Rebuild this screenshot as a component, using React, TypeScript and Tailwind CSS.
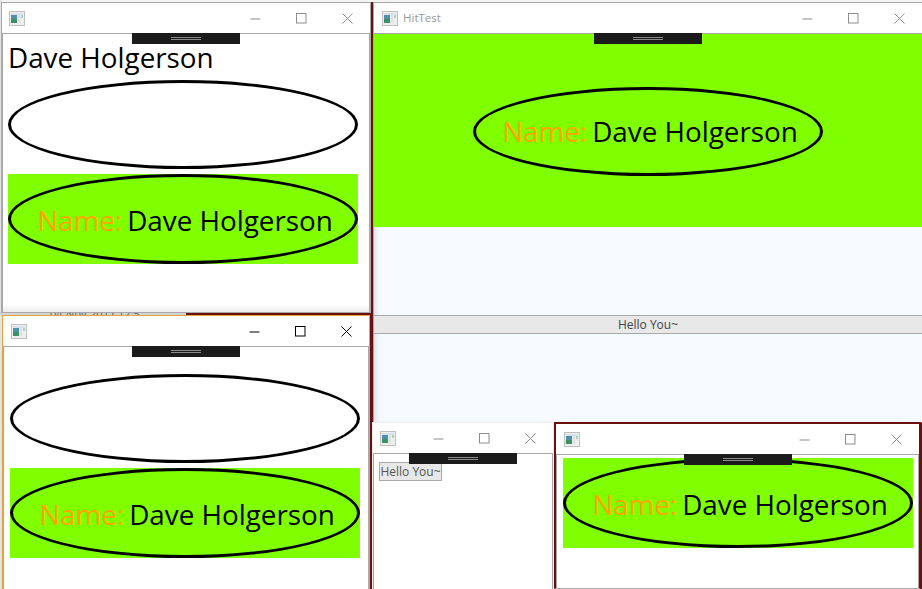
import type { ReactNode } from "react";

const FONT = "[font-family:'Open_Sans','Noto_Sans',sans-serif]";

function AppIcon() {
  return (
    <svg width="16" height="15" viewBox="0 0 16 15" className="shrink-0">
      <rect x="0.5" y="0.5" width="15" height="14" fill="#eeeeee" stroke="#c0c0c0" />
      <rect x="2" y="2" width="12" height="2" fill="#d9e2ea" />
      <rect x="2" y="4" width="6" height="4" fill="#4f8fa8" />
      <rect x="2" y="8" width="6" height="4" fill="#3d8f6a" />
      <rect x="9" y="4" width="2" height="8" fill="#dde0e0" />
      <rect x="12" y="4" width="2" height="3" fill="#a5d3c6" />
    </svg>
  );
}

function TitleBar({ title, active, pad }: { title?: string; active?: boolean; pad: string }) {
  const stroke = active ? "#000000" : "#8c8c8c";
  return (
    <div className="flex h-[30px] shrink-0 items-center bg-white">
      <div className={`flex flex-1 items-center gap-[5px] ${pad}`}>
        <AppIcon />
        {title && <span className="text-[11.5px] text-[#9a9a9a]">{title}</span>}
      </div>
      <div className="flex h-full w-[46px] items-center justify-center">
        <svg width="11" height="11" viewBox="0 0 11 11"><path d="M0.5 6h10" stroke={stroke} /></svg>
      </div>
      <div className="flex h-full w-[46px] items-center justify-center">
        <svg width="11" height="11" viewBox="0 0 11 11"><rect x="0.5" y="0.5" width="9.5" height="9.5" fill="none" stroke={stroke} /></svg>
      </div>
      <div className="flex h-full w-[46px] items-center justify-center">
        <svg width="11" height="11" viewBox="0 0 11 11"><path d="M0.5 0.5l10 10M10.5 0.5l-10 10" stroke={stroke} /></svg>
      </div>
    </div>
  );
}

function DebugBar() {
  return (
    <div className="absolute left-1/2 top-[-1px] z-10 flex h-[11px] w-[108px] -translate-x-1/2 flex-col items-center justify-center gap-px bg-[#1b1b1b]">
      <div className="h-px w-[30px] bg-[#8a8a8a]" />
      <div className="h-px w-[30px] bg-[#8a8a8a]" />
    </div>
  );
}

function Ellipse({ height = "h-[89px]", children }: { height?: string; children?: ReactNode }) {
  return (
    <div className={`flex w-[350px] items-center justify-center rounded-[50%] border-[3px] border-black ${height}`}>
      {children}
    </div>
  );
}

function NameText() {
  return (
    <span className="whitespace-nowrap pl-[4px] text-[27.8px] leading-none">
      <span className="text-[#ffa500]">Name:</span>
      <span className="ml-[5px] text-black">Dave Holgerson</span>
    </span>
  );
}

function GreenEllipse() {
  return (
    <div className="w-[350px] bg-[#7fff00]">
      <Ellipse height="h-[90px]">
        <div className="pt-[5px]">
          <NameText />
        </div>
      </Ellipse>
    </div>
  );
}

function Window({ className, title, active, pad = "pl-[8px]", inner = true, children }: { className: string; title?: string; active?: boolean; pad?: string; inner?: boolean; children?: ReactNode }) {
  return (
    <div className={`absolute flex flex-col border bg-white ${className}`}>
      <TitleBar title={title} active={active} pad={pad} />
      <div className={`relative flex-1 border-t border-[#a8a8a8] ${inner ? "border-x" : ""}`}>
        <DebugBar />
        {children}
      </div>
    </div>
  );
}

export default function App() {
  return (
    <div className={`relative h-[589px] w-[922px] overflow-hidden bg-[#6a1010] ${FONT}`}>
      {/* desktop bits showing between the windows */}
      <div className="absolute left-0 top-0 h-[2px] w-full bg-[#f4f4f4]" />
      <div className="absolute left-0 top-0 h-full w-[2px] bg-[#e4e4e4]" />
      <div className="absolute left-0 top-[312px] h-[3px] w-[186px] overflow-hidden bg-[#d4d4d4] pl-[50px] text-[11px] leading-[3px] text-[#555555]">
        04-Nov-2017 12:5
      </div>

      <Window className="left-px top-[2px] h-[311px] w-[370px] border-[#a8a8a8]" pad="pl-[7px]">
        <div className="flex flex-col pl-[5px]">
          <div className="text-[27.8px] leading-[46px] text-black">Dave Holgerson</div>
          <Ellipse />
          <div className="mt-[5px]">
            <GreenEllipse />
          </div>
        </div>
        <div className="absolute bottom-0 left-0 h-[8px] w-full bg-gradient-to-b from-white to-[#ececec]" />
      </Window>

      <Window className="left-[373px] top-[2px] h-[421px] w-[550px] border-[#a8a8a8]" title="HitTest" inner={false}>
        <div className="flex h-full flex-col bg-[#f5faff] shadow-[inset_5px_0_5px_-3px_#dde0e4]">
          <div className="flex h-[193px] items-center justify-center bg-[#7fff00] pt-[2px]">
            <Ellipse>
              <NameText />
            </Ellipse>
          </div>
          <div className="mt-[88px] flex h-[19px] items-center justify-center border-y border-[#a8a8a8] bg-[#e8e8e8] text-[12px] text-[#444444]">
            Hello You~
          </div>
        </div>
      </Window>

      <Window className="left-[2px] top-[315px] h-[280px] w-[368px] border-[#e8a33d]" active>
        <div className="flex flex-col pl-[6px] pt-[27px]">
          <Ellipse />
          <div className="mt-[5px]">
            <GreenEllipse />
          </div>
        </div>
      </Window>

      <Window className="left-[372px] top-[422px] h-[170px] w-[182px] border-[#ececec]" pad="pl-[7px]">
        <div className="pl-[5px] pt-[8px]">
          <div className="flex h-[19px] w-[63px] items-center justify-center whitespace-nowrap border border-[#a8a8a8] bg-[#e8e8e8] text-[12px] text-[#555555]">
            Hello You~
          </div>
        </div>
      </Window>

      <Window className="left-[554px] top-[422px] h-[167px] w-[367px] border-2 border-[#6a1010] border-b-[#a8a8a8] [border-bottom-width:1px]">
        <div className="pl-[6px] pt-[3px]">
          <GreenEllipse />
        </div>
      </Window>
    </div>
  );
}
